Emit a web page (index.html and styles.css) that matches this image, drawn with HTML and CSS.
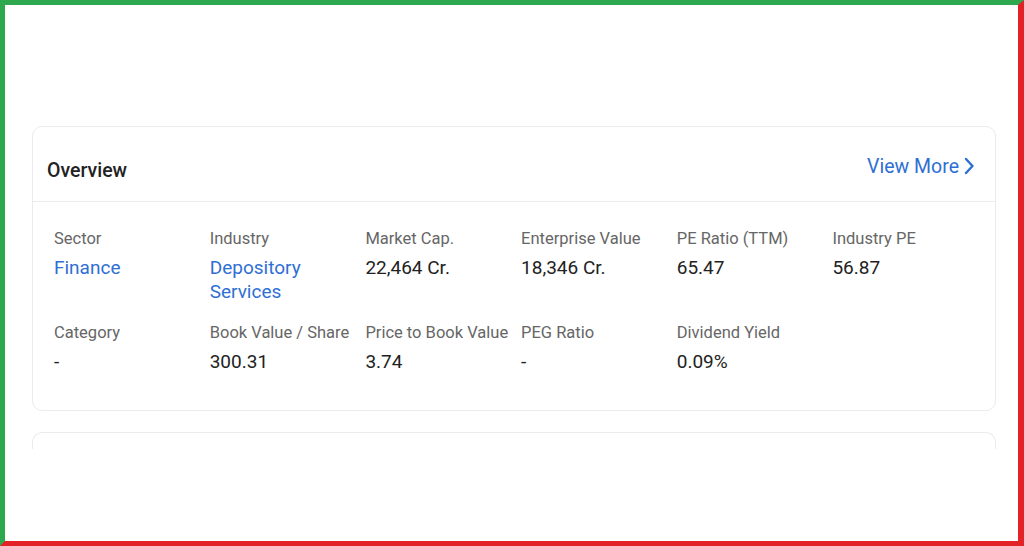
FILE: index.html
```
<!DOCTYPE html>
<html>
<head>
  <link rel="stylesheet" href="styles.css">
</head>
<body>
  <div class="frame">
    <div class="card">
      <div class="card-header">
        <h3>Overview</h3>
        <a class="view-more" href="#">View More
          <svg width="11" height="18" viewBox="0 0 11 18"><path d="M2 2 L8.5 9 L2 16" fill="none" stroke="#2f6fd4" stroke-width="2.4" stroke-linecap="round" stroke-linejoin="round"/></svg>
        </a>
      </div>
      <div class="stats">
        <div class="stat"><div class="label">Sector</div><div class="value link">Finance</div></div>
        <div class="stat"><div class="label">Industry</div><div class="value link">Depository Services</div></div>
        <div class="stat"><div class="label">Market Cap.</div><div class="value">22,464 Cr.</div></div>
        <div class="stat"><div class="label">Enterprise Value</div><div class="value">18,346 Cr.</div></div>
        <div class="stat"><div class="label">PE Ratio (TTM)</div><div class="value">65.47</div></div>
        <div class="stat"><div class="label">Industry PE</div><div class="value">56.87</div></div>
        <div class="stat"><div class="label">Category</div><div class="value">-</div></div>
        <div class="stat"><div class="label">Book Value / Share</div><div class="value">300.31</div></div>
        <div class="stat"><div class="label">Price to Book Value</div><div class="value">3.74</div></div>
        <div class="stat"><div class="label">PEG Ratio</div><div class="value">-</div></div>
        <div class="stat"><div class="label">Dividend Yield</div><div class="value">0.09%</div></div>
      </div>
    </div>
    <div class="card card-next"></div>
  </div>
</body>
</html>
```
FILE: styles.css
```
body {
  margin: 0;
  font-family: Roboto, "Liberation Sans", sans-serif;
  background: #FFFFFF;
}

.frame {
  box-sizing: border-box;
  width: 1024px;
  height: 546px;
  border-top: 5px solid #2EA84F;
  border-left: 5px solid #2EA84F;
  border-right: 6px solid #E32227;
  border-bottom: 5px solid #E32227;
  padding: 121px 22px 0 27px;
  overflow: hidden;
}

.card {
  border: 1px solid #EBEBEB;
  border-radius: 10px;
  background: #FFFFFF;
}

.card-header {
  display: flex;
  align-items: center;
  justify-content: space-between;
  height: 74px;
  padding: 0 20px 0 14px;
  border-bottom: 1px solid #EBEBEB;
}

.card-header h3 {
  margin: 12px 0 0;
  font-size: 19.5px;
  font-weight: 500;
  color: #222222;
}

.view-more {
  display: flex;
  align-items: center;
  gap: 5px;
  margin-top: 4px;
  font-size: 19.5px;
  color: #2F6FD4;
  text-decoration: none;
}

.stats {
  display: grid;
  grid-template-columns: repeat(6, 155.7px);
  row-gap: 19px;
  padding: 27px 0 36px 21px;
}

.label {
  font-size: 16.5px;
  line-height: 20px;
  color: #666666;
  white-space: nowrap;
}

.value {
  margin-top: 7px;
  padding-right: 40px;
  font-size: 19px;
  line-height: 24px;
  color: #222222;
}

.value.link {
  color: #2F6FD4;
}

.card-next {
  height: 16px;
  margin-top: 21px;
  border-bottom: none;
  border-radius: 10px 10px 0 0;
}
```
